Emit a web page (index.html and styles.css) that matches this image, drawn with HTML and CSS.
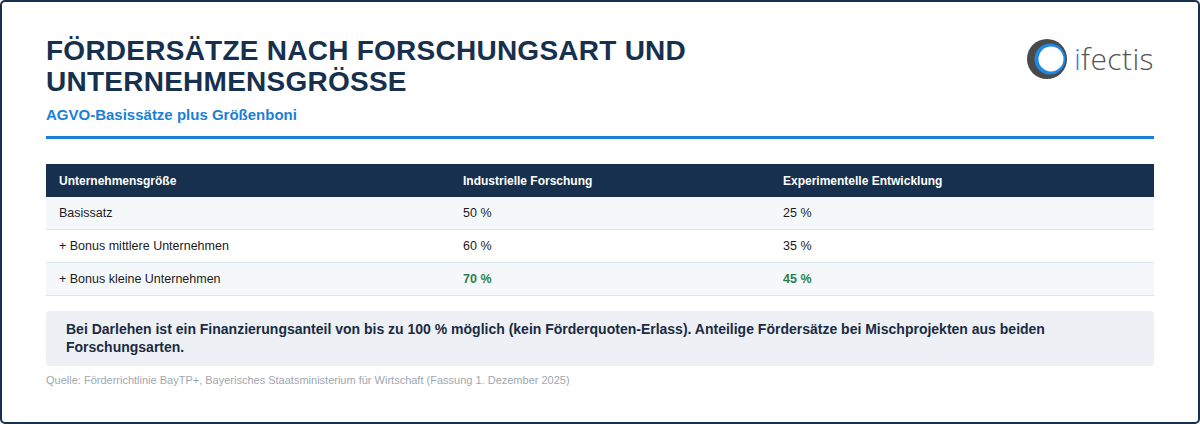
FILE: index.html
```html
<!DOCTYPE html>
<html lang="de">
<head>
<meta charset="utf-8">
<title>Fördersätze</title>
<link rel="stylesheet" href="styles.css">
</head>
<body>
<div class="frame">
  <header class="head">
    <div class="titles">
      <h1 class="title">FÖRDERSÄTZE NACH FORSCHUNGSART UND<br>UNTERNEHMENSGRÖSSE</h1>
      <p class="subtitle">AGVO-Basissätze plus Größenboni</p>
    </div>
    <div class="logo">
      <svg class="logo-mark" width="42" height="42" viewBox="0 0 42 42">
        <circle cx="20" cy="21" r="20" fill="#4a4a4a"/>
        <circle cx="23" cy="21" r="15.5" fill="#1e88e5"/>
        <circle cx="24" cy="21" r="12.5" fill="#ffffff"/>
      </svg>
      <span class="logo-text"><span class="logo-i">i</span>fectis</span>
    </div>
  </header>

  <table class="rates">
    <thead>
      <tr>
        <th class="c1">Unternehmensgröße</th>
        <th class="c2">Industrielle Forschung</th>
        <th class="c3">Experimentelle Entwicklung</th>
      </tr>
    </thead>
    <tbody>
      <tr class="alt">
        <td>Basissatz</td>
        <td>50 %</td>
        <td>25 %</td>
      </tr>
      <tr>
        <td>+ Bonus mittlere Unternehmen</td>
        <td>60 %</td>
        <td>35 %</td>
      </tr>
      <tr class="alt">
        <td>+ Bonus kleine Unternehmen</td>
        <td class="hi">70 %</td>
        <td class="hi">45 %</td>
      </tr>
    </tbody>
  </table>

  <div class="note">Bei Darlehen ist ein Finanzierungsanteil von bis zu 100 % möglich (kein Förderquoten-Erlass). Anteilige Fördersätze bei Mischprojekten aus beiden Forschungsarten.</div>
  <p class="source">Quelle: Förderrichtlinie BayTP+, Bayerisches Staatsministerium für Wirtschaft (Fassung 1. Dezember 2025)</p>
</div>
</body>
</html>
```

FILE: styles.css
```css
html, body {
  margin: 0;
  padding: 0;
  background: #ffffff;
}

body {
  font-family: "Liberation Sans", Arial, sans-serif;
  color: #1b1b1b;
}

.frame {
  box-sizing: border-box;
  width: 1200px;
  height: 424px;
  border: 2px solid #16304d;
  border-radius: 5px;
  padding: 33px 44px 0 44px;
}

.head {
  display: flex;
  justify-content: space-between;
  align-items: flex-start;
  border-bottom: 3px solid #1a7fd8;
  padding-bottom: 12px;
}

.title {
  margin: 0;
  font-size: 28px;
  line-height: 31px;
  font-weight: 700;
  letter-spacing: 0.25px;
  color: #16304d;
}

.subtitle {
  margin: 9px 0 0 0;
  font-size: 15px;
  line-height: 18px;
  font-weight: 700;
  color: #1a7fd8;
}

.logo {
  display: flex;
  align-items: center;
  gap: 5px;
  margin-top: 3px;
}

.logo-mark {
  display: block;
}

.logo-text {
  font-family: "Open Sans", sans-serif;
  font-weight: 300;
  font-size: 30px;
  line-height: 40px;
  color: #555555;
  letter-spacing: 0.4px;
}

.logo-i {
  color: #1e88e5;
}

.rates {
  width: 100%;
  margin-top: 25px;
  border-collapse: collapse;
  font-size: 12.5px;
}

.rates th,
.rates td {
  text-align: left;
  padding: 9px 13px;
  line-height: 14px;
}

.rates th {
  background: #16304d;
  color: #ffffff;
  font-size: 12px;
  font-weight: 700;
  padding-top: 10px;
  padding-bottom: 9px;
}

.rates td {
  border-bottom: 1px solid #dde3ea;
  color: #1b1b1b;
}

.rates .c1 { width: 378px; }
.rates .c2 { width: 294px; }

.rates tr.alt td {
  background: #f5f8fb;
}

.rates td.hi {
  color: #2e7d4e;
  font-weight: 700;
}

.note {
  margin-top: 15px;
  background: #edf0f5;
  border-radius: 4px;
  padding: 10px 20px;
  font-size: 14px;
  line-height: 17.5px;
  font-weight: 700;
  color: #1a2b44;
}

.source {
  margin: 7px 0 0 0;
  font-size: 11px;
  line-height: 14px;
  color: #a0a7b0;
}
```
